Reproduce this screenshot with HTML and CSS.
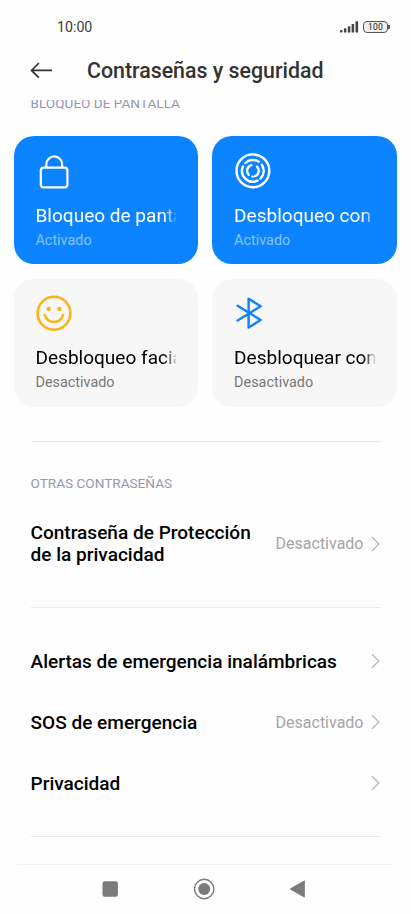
FILE: index.html
```html
<!DOCTYPE html>
<html lang="es">
<head>
<meta charset="utf-8">
<title>Contraseñas y seguridad</title>
<link rel="stylesheet" href="styles.css">
</head>
<body>
<div class="screen">
  <div class="status">
    <span class="clock">10:00</span>
    <svg class="signal" width="19" height="12" viewBox="0 0 19 12" fill="#444"><rect x="0" y="9" width="2.5" height="2.5" rx=".8"/><rect x="3.9" y="7.3" width="2.5" height="4.2" rx=".6"/><rect x="7.8" y="5.2" width="2.5" height="6.3" rx=".6"/><rect x="11.6" y="2.9" width="2.5" height="8.6" rx=".6"/><rect x="15.5" y=".2" width="2.6" height="11.3" rx=".6"/></svg>
    <span class="battery">100</span><span class="battery-tip"></span>
  </div>
  <header class="header">
    <svg width="24" height="18" viewBox="0 0 24 18" fill="none" stroke="#333" stroke-width="1.7"><path d="M22 9.4H1.5M8.9 2L1.5 9.4L8.9 16.6"/></svg>
    <h1>Contraseñas y seguridad</h1>
  </header>
  <main class="content">
    <div class="label first">BLOQUEO DE PANTALLA</div>
    <div class="cards">
      <section class="card on">
        <svg width="40" height="40" viewBox="0 0 40 40" fill="none" stroke="#fff" stroke-width="2.2"><rect x="5.8" y="16.6" width="26.6" height="19.8" rx="3"/><path d="M11.3 16.4V13.3a7.9 7.9 0 0 1 15.8 0V16.4"/></svg>
        <h2>Bloqueo de pantalla</h2><p>Activado</p>
      </section>
      <section class="card on">
        <svg width="40" height="40" viewBox="0 0 40 40" fill="none" stroke="#fff" stroke-width="2.4" stroke-linecap="round"><circle cx="18.9" cy="19.8" r="16.4"/><g transform="translate(.2 .8)"><path d="M11.2 11.2A10.8 10.8 0 0 1 24.6 9.9M27.6 12.9A10.8 10.8 0 0 1 26.2 26.8M23.3 28.8A10.8 10.8 0 0 1 8.8 14.6M17.2 13.4A5.8 5.8 0 0 0 14.5 23M18.3 24.8h.1M20.9 24.4A5.8 5.8 0 0 0 22.8 14.9"/></g></svg>
        <h2>Desbloqueo con huella</h2><p>Activado</p>
      </section>
      <section class="card">
        <svg width="40" height="40" viewBox="0 0 40 40" fill="none" stroke="#f6b519" stroke-width="2.6" stroke-linecap="round"><circle cx="19" cy="19.2" r="16.4"/><path d="M9.8 21.2a9.5 9.5 0 0 0 18.2 0"/><circle cx="13.7" cy="15" r="2.2" fill="#f6b519" stroke="none"/><circle cx="24.4" cy="15" r="2.2" fill="#f6b519" stroke="none"/></svg>
        <h2>Desbloqueo facial</h2><p>Desactivado</p>
      </section>
      <section class="card">
        <svg width="40" height="40" viewBox="0 0 40 40" fill="none" stroke="#1083fa" stroke-width="2.4" stroke-linecap="round" stroke-linejoin="round"><path d="M3.6 11.8L26.7 26.1L14.6 33.5V4.7L26.7 12.2L3.6 26.5"/></svg>
        <h2>Desbloquear con Bluetooth</h2><p>Desactivado</p>
      </section>
    </div>
    <hr class="r1">
    <div class="label second">OTRAS CONTRASEÑAS</div>
    <div class="row tall"><h3>Contraseña de Protección<br>de la privacidad</h3><span class="value">Desactivado</span><svg class="chev" width="10" height="16" viewBox="0 0 10 16"><path d="M1 1.2L8 8L1 14.8"/></svg></div>
    <hr class="r2">
    <div class="rows">
      <div class="row"><h3>Alertas de emergencia inalámbricas</h3><svg class="chev" width="10" height="16" viewBox="0 0 10 16"><path d="M1 1.2L8 8L1 14.8"/></svg></div>
      <div class="row"><h3>SOS de emergencia</h3><span class="value">Desactivado</span><svg class="chev" width="10" height="16" viewBox="0 0 10 16"><path d="M1 1.2L8 8L1 14.8"/></svg></div>
      <div class="row"><h3>Privacidad</h3><svg class="chev" width="10" height="16" viewBox="0 0 10 16"><path d="M1 1.2L8 8L1 14.8"/></svg></div>
    </div>
    <hr class="r3">
  </main>
  <nav class="nav">
    <svg width="22" height="22" viewBox="0 0 22 22" fill="#7b7b7b"><rect x="3.5" y="3.3" width="15.4" height="15.4" rx="2.3"/></svg>
    <svg width="22" height="22" viewBox="0 0 22 22" fill="#7b7b7b"><circle cx="11.2" cy="11" r="9.7" fill="none" stroke="#7b7b7b" stroke-width="1.4"/><circle cx="11.2" cy="11" r="6"/></svg>
    <svg width="22" height="22" viewBox="0 0 22 22" fill="#7b7b7b"><path d="M3.6 10.2L16.8 2.7q1.1-.5 1.1.5v15.6q0 1-1.1.5L3.6 11.8q-1.2-.8 0-1.6z"/></svg>
  </nav>
</div>
</body>
</html>
```
FILE: styles.css
```css
* { box-sizing: border-box; margin: 0; padding: 0; }
body { background: #fefefe; font-family: Roboto, "Liberation Sans", sans-serif; color: #000; }
svg { display: block; flex: none; }
.screen { width: 411px; height: 914px; display: flex; flex-direction: column; overflow: hidden; }

.status { height: 54px; display: flex; align-items: center; padding: 0 21px 0 57px; flex: none; }
.clock { flex: 1; font-size: 14.2px; color: #3a3a3a; }
.signal { margin-right: 4px; }
.battery { width: 25px; height: 12px; border: 1.3px solid #555; border-radius: 4px; background: #eee; font-size: 8.5px; line-height: 10px; font-weight: 400; letter-spacing: .2px; text-align: center; color: #222; }
.battery-tip { width: 2px; height: 4px; background: #555; border-radius: 0 1px 1px 0; }

.header { height: 46px; display: flex; align-items: flex-start; padding: 7px 0 0 30px; flex: none; }
.header h1 { margin: -4px 0 0 33px; font-size: 21.35px; line-height: 28px; font-weight: 500; color: #333; white-space: nowrap; }

.content { flex: 1; overflow: hidden; }
.label { font-size: 13.6px; line-height: 18px; color: #9498b0; padding-left: 30.5px; white-space: nowrap; }
.label.first { margin-top: -6.4px; margin-bottom: 24.8px; }

.cards { display: grid; grid-template-columns: 184.7px 184.7px; gap: 14.3px 13.9px; padding-left: 13.7px; }
.card { height: 128px; border-radius: 20px; padding: 15px 22px 0 21.8px; background: #f7f7f7; overflow: hidden; }
.card h2 { margin-top: 12.5px; font-size: 19.05px; line-height: 24px; font-weight: 400; white-space: nowrap; overflow: hidden; -webkit-mask-image: linear-gradient(90deg, #000 calc(100% - 12px), transparent calc(100% + 2px)); mask-image: linear-gradient(90deg, #000 calc(100% - 12px), transparent calc(100% + 2px)); }
.card p { margin-top: 3.7px; font-size: 14.4px; line-height: 18px; color: #777; }
.card.on { background: #0d84ff; color: #fff; }
.card.on p { color: #86c4ff; }

hr { border: 0; height: 1px; background: #e9e9e9; margin: 0 30.5px; }
.r1 { margin-top: 34.3px; }
.label.second { margin-top: 32px; margin-bottom: 1px; }

.row { display: flex; align-items: center; height: 61px; padding: 0 30px 0 30.5px; }
.row h3 { flex: 1; font-size: 19.06px; line-height: 22px; font-weight: 500; white-space: nowrap; padding-top: 1.2px; }
.row.tall { height: 101px; }
.value { font-size: 16px; color: #a5a5a5; margin-right: 7.5px; }
.chev path { fill: none; stroke: #b5b5b5; stroke-width: 1.2; }
.rows { padding-top: 23.4px; }
.r2 { margin-top: 12.6px; }
.r3 { margin-top: 22px; }

.nav { flex: none; height: 50px; margin: 0 18px 0 17px; padding: 0 84px 1.5px 82px; border-top: 1px solid #f3f3f3; display: flex; align-items: center; justify-content: space-between; }
```
